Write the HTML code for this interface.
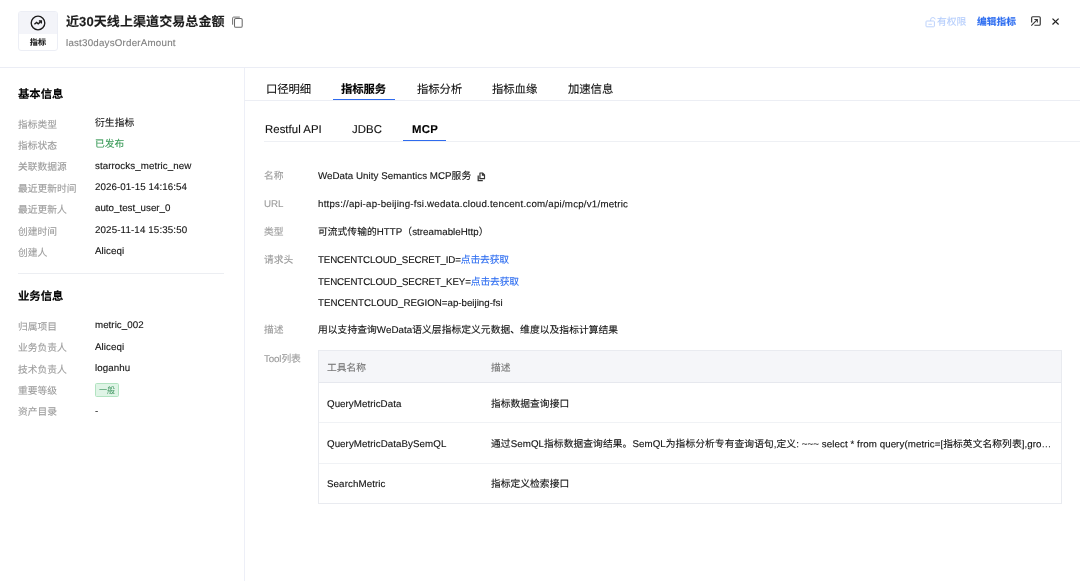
<!DOCTYPE html>
<html lang="zh-CN">
<head>
<meta charset="utf-8">
<title>指标详情</title>
<style>
*{box-sizing:border-box;margin:0;padding:0}
html,body{width:1080px;height:581px;overflow:hidden;background:#fff}
body{font-family:"Liberation Sans","Noto Sans CJK SC",sans-serif;font-size:9.75px;color:#121212;position:relative}
.abs{position:absolute;white-space:nowrap;-webkit-text-stroke:0.12px currentColor;transform:rotate(0.03deg);transform-origin:0 50%}
.bx{position:absolute}
</style>
</head>
<body>
<div id="root" style="position:absolute;left:0;top:0;width:1080px;height:581px;will-change:transform">

<!-- header -->
<div class="bx" style="left:0;top:67px;width:1080px;height:1px;background:#ebedf5"></div>
<div class="bx" style="left:18px;top:11.2px;width:39.9px;height:39.4px;border:1px solid #eceef5;border-radius:3px;background:#fff;overflow:hidden">
  <div class="bx" style="left:0;top:0;width:100%;height:22.2px;background:#f3f4f9"></div>
  <svg class="bx" style="left:9.5px;top:2.1px" width="18" height="18" viewBox="0 0 18 18"><circle cx="9" cy="9" r="6.8" fill="none" stroke="#1c1c1c" stroke-width="1.35"/><path d="M5.4 10.3 L7.6 8.5 L9.2 9.9 L12 7.5" fill="none" stroke="#1c1c1c" stroke-width="1.4"/><path d="M9.9 7 H12.4 V9.5" fill="none" stroke="#1c1c1c" stroke-width="1.3"/></svg>
</div>
<div class="abs" style="left:18px;top:36.3px;width:39.9px;text-align:center;font-size:8.1px;font-weight:bold;line-height:14px;color:#222">指标</div>
<svg class="bx" style="left:231px;top:15px" width="14" height="14" viewBox="0 0 14 14"><path d="M1.6 9.7 V3.1 Q1.6 2.1 2.6 2.1 H8.8" fill="none" stroke="#707070" stroke-width="1"/><rect x="3.5" y="3.4" width="7.7" height="8.9" rx="1.4" fill="#fff" stroke="#6a6a6a" stroke-width="1.05"/></svg>
<svg class="bx" style="left:924.8px;top:16px" width="12" height="12" viewBox="0 0 12 12"><rect x="1" y="5" width="8.4" height="5.8" rx="0.8" fill="none" stroke="#bdd2fb" stroke-width="1"/><path d="M5.6 5 V3.8 Q5.6 1.5 7.9 1.5 Q9.9 1.5 10.2 3.4" fill="none" stroke="#bdd2fb" stroke-width="1"/><path d="M3.4 8.3 H6.9" stroke="#c6d8fc" stroke-width="1"/></svg>
<svg class="bx" style="left:1030px;top:15px" width="12" height="12" viewBox="0 0 12 12"><path d="M1.65 7.6 V2.7 Q1.65 1.7 2.65 1.7 H9.25 Q10.25 1.7 10.25 2.7 V9.2 Q10.25 10.2 9.25 10.2 H4.4" fill="none" stroke="#333" stroke-width="1.15"/><path d="M1.3 10.6 L7.2 4.7 M4.4 4.55 H7.35 V7.6" fill="none" stroke="#333" stroke-width="1.05"/></svg>
<svg class="bx" style="left:1051px;top:16.7px" width="9" height="9" viewBox="0 0 9 9"><path d="M1.5 1.6 L7.6 7.5 M7.6 1.6 L1.5 7.5" stroke="#222" stroke-width="1.25"/></svg>
<!-- left panel -->
<div class="bx" style="left:243.8px;top:68px;width:1.2px;height:513px;background:#edeff7"></div>
<div class="bx" style="left:18px;top:272.6px;width:206.3px;height:0.8px;background:#eceef2"></div>
<div class="abs" style="left:94.8px;top:383px;width:24.2px;height:13.7px;border:1px solid #b2e3c1;background:#dff4e6;border-radius:1.6px;color:#3f9560;font-size:8.1px;line-height:14.4px;text-align:center;-webkit-text-stroke:0">一般</div>
<!-- tabs -->
<div class="bx" style="left:244px;top:100px;width:836px;height:1px;background:#eceef4"></div>
<div class="bx" style="left:333px;top:98.8px;width:62px;height:1.6px;background:#2f6bee"></div>
<div class="bx" style="left:263.8px;top:141px;width:816.2px;height:0.8px;background:#eef0f4"></div>
<div class="bx" style="left:403.2px;top:139.8px;width:43.2px;height:1.6px;background:#2f6bee"></div>
<svg class="bx" style="left:476.6px;top:171.6px" width="9" height="10" viewBox="0 0 9 10"><path d="M2.95 1.0 H5.5 L7.5 3.0 V6.7 H2.95 Z" fill="none" stroke="#333" stroke-width="1.2" stroke-linejoin="round"/><path d="M4.9 0.8 L7.9 3.8 H4.9 Z" fill="#333"/><path d="M1.2 3.4 V8.5 H5.8" fill="none" stroke="#333" stroke-width="1.25"/></svg>
<!-- table -->
<div class="bx" style="left:318px;top:350px;width:744px;height:153.6px;border:1px solid #e9ebf0">
  <div class="bx" style="left:0;top:0;width:100%;height:31.6px;background:#f5f6f9;border-bottom:1px solid #e6e8ee"></div>
  <div class="bx" style="left:0;top:71.3px;width:100%;height:0.8px;background:#f0f2f5"></div>
  <div class="bx" style="left:0;top:112px;width:100%;height:0.8px;background:#f0f2f5"></div>
</div>

<div class="abs" id="title" style="left:65.6px;top:12.2px;font-size:13px;line-height:20px;font-weight:bold;color:#1c1c1c;letter-spacing:0.086px">近30天线上渠道交易总金额</div>
<div class="abs" id="sub" style="left:65.8px;top:36.2px;font-size:9.75px;line-height:14px;color:#7f7f7f;letter-spacing:0.217px">last30daysOrderAmount</div>
<div class="abs" id="perm" style="left:936.6px;top:15px;font-size:9.75px;line-height:14px;color:#b5cdfb;letter-spacing:0.048px">有权限</div>
<div class="abs" id="edit" style="left:977.2px;top:14.7px;font-size:9.75px;line-height:14px;font-weight:bold;color:#2d6df0;letter-spacing:0.023px">编辑指标</div>
<div class="abs" id="h1" style="left:18px;top:85.7px;font-size:11.375px;line-height:16px;font-weight:bold;color:#000;letter-spacing:-0.015px">基本信息</div>
<div class="abs" id="l0" style="left:18px;top:117.7px;font-size:9.75px;line-height:14px;color:#9c9c9c">指标类型</div>
<div class="abs" id="v0" style="left:95px;top:116.2px;font-size:9.75px;line-height:14px;color:#121212;letter-spacing:0.073px">衍生指标</div>
<div class="abs" id="l1" style="left:18px;top:139.08px;font-size:9.75px;line-height:14px;color:#9c9c9c">指标状态</div>
<div class="abs" id="v1" style="left:95px;top:137.48px;font-size:9.75px;line-height:14px;color:#3a9a58;letter-spacing:0.014px">已发布</div>
<div class="abs" id="l2" style="left:18px;top:160.46px;font-size:9.75px;line-height:14px;color:#9c9c9c;letter-spacing:0.009px">关联数据源</div>
<div class="abs" id="v2" style="left:95px;top:158.76px;font-size:9.75px;line-height:14px;color:#121212;letter-spacing:0.073px">starrocks_metric_new</div>
<div class="abs" id="l3" style="left:18px;top:181.84px;font-size:9.75px;line-height:14px;color:#9c9c9c">最近更新时间</div>
<div class="abs" id="v3" style="left:95px;top:180.04px;font-size:9.75px;line-height:14px;color:#121212;letter-spacing:0.081px">2026-01-15 14:16:54</div>
<div class="abs" id="l4" style="left:18px;top:203.22px;font-size:9.75px;line-height:14px;color:#9c9c9c;letter-spacing:0.009px">最近更新人</div>
<div class="abs" id="v4" style="left:95px;top:201.32px;font-size:9.75px;line-height:14px;color:#121212;letter-spacing:0.008px">auto_test_user_0</div>
<div class="abs" id="l5" style="left:18px;top:224.6px;font-size:9.75px;line-height:14px;color:#9c9c9c">创建时间</div>
<div class="abs" id="v5" style="left:95px;top:222.6px;font-size:9.75px;line-height:14px;color:#121212;letter-spacing:0.131px">2025-11-14 15:35:50</div>
<div class="abs" id="l6" style="left:18px;top:245.98px;font-size:9.75px;line-height:14px;color:#9c9c9c;letter-spacing:0.014px">创建人</div>
<div class="abs" id="v6" style="left:95px;top:243.88px;font-size:9.75px;line-height:14px;color:#121212;letter-spacing:0.080px">Aliceqi</div>
<div class="abs" id="h2" style="left:18px;top:287.6px;font-size:11.375px;line-height:16px;font-weight:bold;color:#000;letter-spacing:-0.015px">业务信息</div>
<div class="abs" id="m0" style="left:18px;top:319.8px;font-size:9.75px;line-height:14px;color:#9c9c9c">归属项目</div>
<div class="abs" id="w0" style="left:95px;top:318.3px;font-size:9.75px;line-height:14px;color:#121212;letter-spacing:0.036px">metric_002</div>
<div class="abs" id="m1" style="left:18px;top:341.15px;font-size:9.75px;line-height:14px;color:#9c9c9c;letter-spacing:0.009px">业务负责人</div>
<div class="abs" id="w1" style="left:95px;top:339.65px;font-size:9.75px;line-height:14px;color:#121212;letter-spacing:0.080px">Aliceqi</div>
<div class="abs" id="m2" style="left:18px;top:362.5px;font-size:9.75px;line-height:14px;color:#9c9c9c;letter-spacing:0.009px">技术负责人</div>
<div class="abs" id="w2" style="left:95px;top:361px;font-size:9.75px;line-height:14px;color:#121212;letter-spacing:0.070px">loganhu</div>
<div class="abs" id="m3" style="left:18px;top:383.85px;font-size:9.75px;line-height:14px;color:#9c9c9c">重要等级</div>
<div class="abs" id="m4" style="left:18px;top:405.2px;font-size:9.75px;line-height:14px;color:#9c9c9c">资产目录</div>
<div class="abs" id="w4" style="left:95px;top:403.7px;font-size:9.75px;line-height:14px;color:#121212">-</div>
<div class="abs" id="t0" style="left:266.2px;top:80.7px;font-size:11.375px;line-height:16px;color:#111;letter-spacing:-0.090px">口径明细</div>
<div class="abs" id="t1" style="left:341.2px;top:80.7px;font-size:11.375px;line-height:16px;color:#111;font-weight:bold;color:#000;letter-spacing:-0.090px">指标服务</div>
<div class="abs" id="t2" style="left:417px;top:80.7px;font-size:11.375px;line-height:16px;color:#111;letter-spacing:-0.090px">指标分析</div>
<div class="abs" id="t3" style="left:492.4px;top:80.7px;font-size:11.375px;line-height:16px;color:#111;letter-spacing:-0.065px">指标血缘</div>
<div class="abs" id="t4" style="left:567.8px;top:80.7px;font-size:11.375px;line-height:16px;color:#111;letter-spacing:-0.065px">加速信息</div>
<div class="abs" id="s0" style="left:265.3px;top:121.2px;font-size:11.375px;line-height:16px;color:#111;letter-spacing:0.054px">Restful API</div>
<div class="abs" id="s1" style="left:351.8px;top:121.2px;font-size:11.375px;line-height:16px;color:#111;letter-spacing:0.105px">JDBC</div>
<div class="abs" id="s2" style="left:411.8px;top:121.2px;font-size:11.375px;line-height:16px;font-weight:bold;color:#000;letter-spacing:0.347px">MCP</div>
<div class="abs" id="dl0" style="left:264.4px;top:168.9px;font-size:9.75px;line-height:14px;color:#9c9c9c">名称</div>
<div class="abs" id="dv0" style="left:318px;top:168.9px;font-size:9.75px;line-height:14px;color:#121212;letter-spacing:0.040px">WeData Unity Semantics MCP服务</div>
<div class="abs" id="dl1" style="left:264.4px;top:196.9px;font-size:9.75px;line-height:14px;color:#9c9c9c">URL</div>
<div class="abs" id="dv1" style="left:318px;top:196.9px;font-size:9.75px;line-height:14px;color:#121212;letter-spacing:0.207px">https://api-ap-beijing-fsi.wedata.cloud.tencent.com/api/mcp/v1/metric</div>
<div class="abs" id="dl2" style="left:264.4px;top:225.1px;font-size:9.75px;line-height:14px;color:#9c9c9c">类型</div>
<div class="abs" id="dv2" style="left:318px;top:225.1px;font-size:9.75px;line-height:14px;color:#121212;letter-spacing:0.039px">可流式传输的HTTP（streamableHttp）</div>
<div class="abs" id="dl3" style="left:264.4px;top:252.8px;font-size:9.75px;line-height:14px;color:#9c9c9c">请求头</div>
<div class="abs" id="dv3" style="left:318px;top:252.8px;font-size:9.75px;line-height:14px;color:#121212;letter-spacing:-0.138px">TENCENTCLOUD_SECRET_ID=<span style="color:#2d6df0">点击去获取</span></div>
<div class="abs" id="dv4" style="left:318px;top:274.5px;font-size:9.75px;line-height:14px;color:#121212;letter-spacing:-0.125px">TENCENTCLOUD_SECRET_KEY=<span style="color:#2d6df0">点击去获取</span></div>
<div class="abs" id="dv5" style="left:318px;top:295.6px;font-size:9.75px;line-height:14px;color:#121212;letter-spacing:-0.013px">TENCENTCLOUD_REGION=ap-beijing-fsi</div>
<div class="abs" id="dl6" style="left:264.4px;top:323px;font-size:9.75px;line-height:14px;color:#9c9c9c">描述</div>
<div class="abs" id="dv6" style="left:318px;top:323px;font-size:9.75px;line-height:14px;color:#121212;letter-spacing:0.057px">用以支持查询WeData语义层指标定义元数据、维度以及指标计算结果</div>
<div class="abs" id="dl7" style="left:264.4px;top:351.5px;font-size:9.75px;line-height:14px;color:#9c9c9c;letter-spacing:-0.116px">Tool列表</div>
<div class="abs" id="th0" style="left:326.9px;top:361.1px;font-size:9.75px;line-height:14px;color:#767676">工具名称</div>
<div class="abs" id="th1" style="left:491.2px;top:361.1px;font-size:9.75px;line-height:14px;color:#767676">描述</div>
<div class="abs" id="ta0" style="left:326.9px;top:396.6px;font-size:9.75px;line-height:14px;color:#121212;letter-spacing:0.047px">QueryMetricData</div>
<div class="abs" id="tb0" style="left:491.2px;top:396.6px;font-size:9.75px;line-height:14px;color:#121212;letter-spacing:0.024px">指标数据查询接口</div>
<div class="abs" id="ta1" style="left:326.9px;top:436.7px;font-size:9.75px;line-height:14px;color:#121212;letter-spacing:0.058px">QueryMetricDataBySemQL</div>
<div class="abs" id="ta2" style="left:326.9px;top:476.5px;font-size:9.75px;line-height:14px;color:#121212;letter-spacing:0.096px">SearchMetric</div>
<div class="abs" id="tb2" style="left:491.2px;top:476.5px;font-size:9.75px;line-height:14px;color:#121212;letter-spacing:0.024px">指标定义检索接口</div>
<div class="abs" id="tb1" style="left:491.2px;top:436.7px;font-size:9.75px;line-height:14px;color:#121212;letter-spacing:0.068px">通过SemQL指标数据查询结果。SemQL为指标分析专有查询语句,定义: ~~~ select * from query(metric=[指标英文名称列表],gro…</div>
</div>
</body>
</html>
